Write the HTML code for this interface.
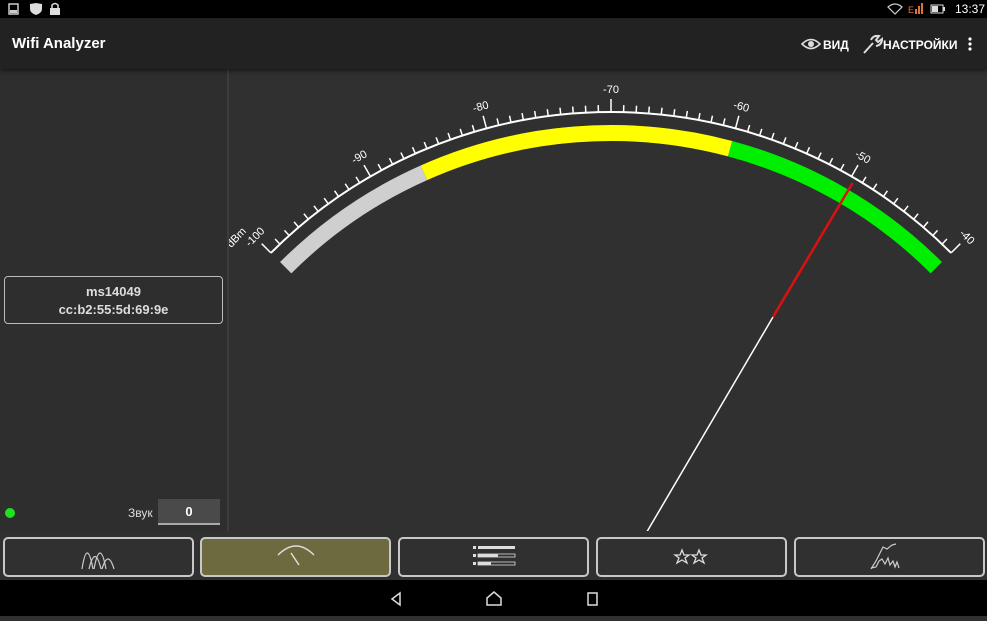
<!DOCTYPE html><html><head><meta charset="utf-8"><style>
*{margin:0;padding:0;box-sizing:border-box}
body{width:987px;height:616px;background:#303030;font-family:"Liberation Sans",sans-serif;position:relative;overflow:hidden;color:#fff}
.sb{position:absolute;left:0;top:0;width:987px;height:18px;background:#000}
.tb{position:absolute;left:0;top:18px;width:987px;height:51px;background:#222;box-shadow:0 2px 4px rgba(0,0,0,.5);z-index:2}
.left{position:absolute;left:0;top:69px;width:228px;height:462px;background:#2e2e2e}
.div{position:absolute;left:227px;top:69px;width:2px;height:462px;background:#3c3c3c}
.box{position:absolute;left:4px;top:276px;width:219px;height:48px;border:1.5px solid #bbb;border-radius:4px;text-align:center;font-size:13px;font-weight:bold;color:#ddd;line-height:18px;padding-top:6px}
.btn{position:absolute;top:537px;height:40px;border:2px solid #c8c8c8;border-radius:5px;background:#303030}
.nav{position:absolute;left:0;top:580px;width:987px;height:36px;background:#000}
</style></head><body>
<div class="sb">
<svg width="987" height="18" style="position:absolute;left:0;top:0">
<rect x="9" y="4" width="9" height="10" fill="none" stroke="#ccc" stroke-width="1.5"/><rect x="10" y="10" width="7" height="3" fill="#ccc"/>
<path d="M30 4 L36 3 L42 4 L42 9 Q42 13 36 15 Q30 13 30 9Z" fill="#ddd"/>
<rect x="50" y="8" width="10" height="7" fill="#ddd"/><path d="M52 8 V5 Q55 2 58 5 V8" fill="none" stroke="#ddd" stroke-width="1.5"/>
<path d="M888 7 Q895 1 902 7 L895 14Z" fill="none" stroke="#ccc" stroke-width="1.2"/>
<text x="908" y="13" font-size="9" fill="#e07030" font-family="Liberation Sans">E</text><rect x="915" y="9" width="2" height="5" fill="#e07030"/><rect x="918" y="6" width="2" height="8" fill="#e07030"/><rect x="921" y="3" width="2" height="11" fill="#e07030"/>
<rect x="931" y="5" width="12" height="8" fill="none" stroke="#ddd"/><rect x="932" y="6" width="6" height="6" fill="#ddd"/><rect x="943" y="7" width="2" height="4" fill="#ddd"/>
<text x="955" y="13" font-size="12" fill="#fff" font-family="Liberation Sans">13:37</text>
</svg></div>
<div class="tb">
<div style="position:absolute;left:12px;top:17px;font-size:15px;font-weight:bold">Wifi Analyzer</div>
<svg width="200" height="51" style="position:absolute;left:787px;top:0">
<path d="M15 26 Q24 17 33 26 Q24 35 15 26Z" fill="none" stroke="#ddd" stroke-width="1.6"/><circle cx="24" cy="26" r="3" fill="#ddd"/>
<text x="36" y="31" font-size="12" font-weight="bold" fill="#fff" font-family="Liberation Sans">ВИД</text>
<path d="M77 35 L86 25 M84 22 Q86 17 92 18 L89 22 L91 24 L95 21 Q95 27 89 28" fill="none" stroke="#ddd" stroke-width="2"/>
<text x="96" y="31" font-size="12" font-weight="bold" fill="#fff" font-family="Liberation Sans">НАСТРОЙКИ</text>
<circle cx="183" cy="21" r="1.6" fill="#fff"/><circle cx="183" cy="26" r="1.6" fill="#fff"/><circle cx="183" cy="31" r="1.6" fill="#fff"/>
</svg></div>
<div class="left"></div><div class="div"></div>
<div class="box">ms14049<br>cc:b2:55:5d:69:9e</div>
<div style="position:absolute;left:5px;top:508px;width:10px;height:10px;border-radius:50%;background:#1ee21e"></div>
<div style="position:absolute;left:128px;top:506px;font-size:12px;color:#ddd">Звук</div>
<div style="position:absolute;left:158px;top:499px;width:62px;height:26px;background:#4a4a4a;border-bottom:2px solid #aaa;text-align:center;font-size:13px;line-height:25px;font-weight:bold">0</div>
<svg width="987" height="531" style="position:absolute;left:0;top:0;z-index:1" font-family="Liberation Sans">
<defs><clipPath id="c"><rect x="229" y="69" width="758" height="462"/></clipPath></defs>
<g clip-path="url(#c)">
<path d="M285.7 267.7 A460 460 0 0 1 423.9 172.8" fill="none" stroke="#cfcfcf" stroke-width="16"/>
<path d="M423.9 172.8 A460 460 0 0 1 730.1 148.7" fill="none" stroke="#ffff00" stroke-width="16"/>
<path d="M730.1 148.7 A460 460 0 0 1 936.3 267.7" fill="none" stroke="#00ee00" stroke-width="16"/>
<path d="M270.9 252.9 A481 481 0 0 1 951.1 252.9" fill="none" stroke="#fff" stroke-width="2"/>
<g stroke="#fff" stroke-width="1.5" id="ticks"></g>
<g fill="#fff" font-size="11" text-anchor="middle">
<text x="611" y="93" transform="rotate(-45 611 593)">-100</text>
<text x="611" y="80" transform="rotate(-46.5 611 593)">dBm</text>
<text x="611" y="93" transform="rotate(-30 611 593)">-90</text>
<text x="611" y="93" transform="rotate(-15 611 593)">-80</text>
<text x="611" y="93" transform="rotate(0 611 593)">-70</text>
<text x="611" y="93" transform="rotate(15 611 593)">-60</text>
<text x="611" y="93" transform="rotate(30 611 593)">-50</text>
<text x="611" y="93" transform="rotate(45 611 593)">-40</text>
</g>
<line x1="611" y1="593" x2="773" y2="317" stroke="#fff" stroke-width="1.5"/>
<line x1="773" y1="317" x2="852.6" y2="183" stroke="#dd1010" stroke-width="2.5"/>
</g></svg>
<script>
(function(){var g=document.getElementById('ticks'),s='';for(var k=0;k<=60;k++){var a=-45+1.5*k,l=(k%10==0)?13:7;s+='<line x1="611" y1="112" x2="611" y2="'+(112-l)+'" transform="rotate('+a+' 611 593)"/>';}g.innerHTML=s;})();
</script>
<div class="btn" style="left:3px;width:191px"><svg width="187" height="36"><path d="M77 30 Q82 -2 88 30 M84 30 Q90 5 96 30 M89 30 Q95 -2 101 30 M97 30 Q103 10 109 30" fill="none" stroke="#ccc" stroke-width="1.2"/></svg></div>
<div class="btn" style="left:200px;width:191px;background:#6e6a40"><svg width="187" height="36"><path d="M76 16 Q94 -2 112 16" fill="none" stroke="#ddd" stroke-width="1.5"/><line x1="89" y1="14" x2="97" y2="26" stroke="#ddd" stroke-width="1.5"/></svg></div>
<div class="btn" style="left:398px;width:191px"><svg width="187" height="36"><g fill="#ddd"><rect x="73" y="7" width="3" height="3"/><rect x="78" y="7" width="37" height="3"/><rect x="73" y="15" width="3" height="3"/><rect x="78" y="15" width="20" height="3"/><rect x="73" y="23" width="3" height="3"/><rect x="78" y="23" width="13" height="3"/></g><rect x="78" y="15" width="37" height="3" fill="none" stroke="#ddd" stroke-width=".8"/><rect x="78" y="23" width="37" height="3" fill="none" stroke="#ddd" stroke-width=".8"/></svg></div>
<div class="btn" style="left:596px;width:191px"><svg width="187" height="36"><path id="st" d="M84 11 L86 16 L91 16 L87 19 L89 24 L84 21 L79 24 L81 19 L77 16 L82 16Z" fill="none" stroke="#ddd" stroke-width="1.3"/><path d="M101 11 L103 16 L108 16 L104 19 L106 24 L101 21 L96 24 L98 19 L94 16 L99 16Z" fill="none" stroke="#ddd" stroke-width="1.3"/></svg></div>
<div class="btn" style="left:794px;width:191px"><svg width="187" height="36"><path d="M75 30 L80 22 L83 16 L87 8 L91 10 L96 6 L100 5 M75 29 L80 28 L83 22 L86 20 L89 25 L92 19 L94 26 L97 22 L99 28 L101 23 L103 29" fill="none" stroke="#ccc" stroke-width="1.2"/></svg></div>
<div class="nav"><svg width="987" height="36"><path d="M400 13 L392 19 L400 25Z" fill="none" stroke="#ddd" stroke-width="1.5"/><path d="M487 25 V18 L494 12 L501 18 V25Z" fill="none" stroke="#ddd" stroke-width="1.5"/><rect x="588" y="13" width="9" height="12" fill="none" stroke="#ddd" stroke-width="1.5"/></svg></div>
</body></html>
